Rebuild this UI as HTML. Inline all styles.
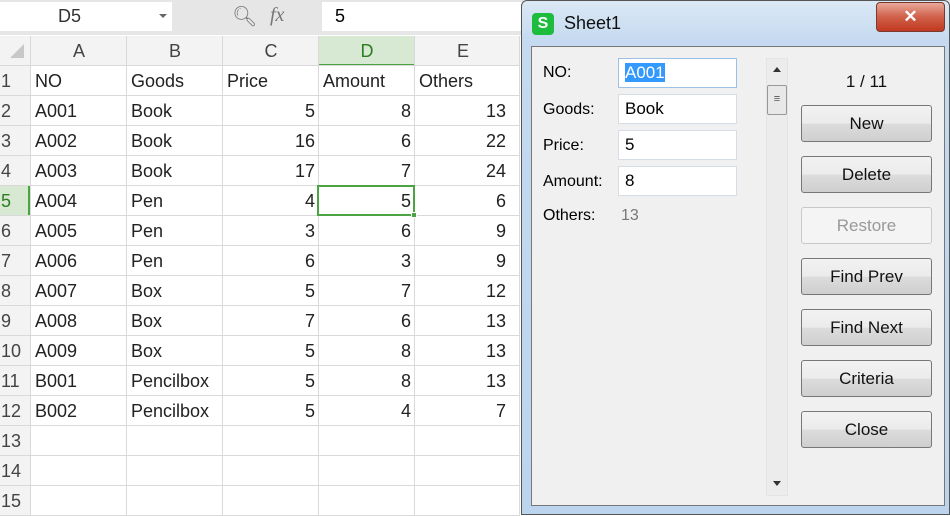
<!DOCTYPE html>
<html><head><style>
*{margin:0;padding:0;box-sizing:border-box}
body{width:950px;height:515px;overflow:hidden;background:#fff;font-family:"Liberation Sans",sans-serif;position:relative}
.a{position:absolute}
.fb{left:0;top:0;width:950px;height:35px;background:#e6e6e6}
.cell{position:absolute;font-size:18px;color:#222;line-height:30px;padding:0 4px;white-space:nowrap;overflow:hidden}
.hl{position:absolute;background:#d9d9d9}
.dlg{font-size:16px;color:#222}
.inp{position:absolute;left:618px;width:119px;height:30px;background:#fff;border:1px solid #d6dde6;line-height:28px;padding-left:6px;font-size:17px}
.lab{position:absolute;left:543px;font-size:16px}
.btn{position:absolute;left:801px;width:131px;height:37px;border:1px solid #777;border-radius:3px;background:linear-gradient(#f2f2f2,#ebebeb 50%,#dcdcdc 51%,#cfcfcf);text-align:center;line-height:35px;font-size:17px;color:#111}
</style></head><body>
<div class="a fb"></div>
<div class="a" style="left:0;top:2px;width:172px;height:29px;background:#fff"></div>
<div class="a" style="left:58px;top:6px;font-size:18px;color:#333">D5</div>
<div class="a" style="left:159px;top:14px;border:4px solid transparent;border-top:4px solid #666"></div>
<div class="a" style="left:232px;top:4px;font-size:20px;color:#777">&#x1F50D;&#xFE0E;</div>
<div class="a" style="left:270px;top:4px;font-size:20px;color:#777;font-style:italic;font-family:'Liberation Serif',serif">fx</div>
<div class="a" style="left:322px;top:2px;width:200px;height:29px;background:#fff"></div>
<div class="a" style="left:335px;top:6px;font-size:18px">5</div>
<div class="a" style="left:0;top:36px;width:520px;height:30px;background:#f3f3f3;border-bottom:1px solid #d9d9d9"></div>
<div class="a" style="left:0;top:66px;width:30px;height:449px;background:#f3f3f3"></div>
<div class="a" style="left:319px;top:36px;width:96px;height:30px;background:#d7e8d3;border-bottom:2px solid #4ca341"></div>
<div class="a" style="left:0;top:186px;width:30px;height:30px;background:#d7e8d3;border-right:2px solid #4ca341"></div>
<div class="a" style="left:10px;top:44px;border-left:14px solid transparent;border-bottom:14px solid #c8c8c8"></div>
<div id="grid"></div>
<script>
var cols=[31,127,223,319,415,520],L=["A","B","C","D","E"];
var h="";
for(var i=0;i<6;i++)h+='<div class="hl" style="left:'+(cols[i]-1)+'px;top:36px;width:1px;height:479px"></div>';
h+='<div class="hl" style="left:30px;top:36px;width:1px;height:479px"></div>';
for(var r=0;r<16;r++)h+='<div class="hl" style="left:0;top:'+(65+r*30)+'px;width:520px;height:1px"></div>';
for(var i=0;i<5;i++)h+='<div class="cell" style="left:'+cols[i]+'px;top:36px;width:96px;text-align:center;color:'+(i==3?'#2d7d22':'#444')+'">'+L[i]+'</div>';
for(var r=1;r<=15;r++)h+='<div class="cell" style="left:0;top:'+(36+r*30)+'px;width:30px;color:'+(r==5?'#2d7d22':'#444')+';padding:0 0 0 1px">'+r+'</div>';
var d=[["NO","Goods","Price","Amount","Others"],["A001","Book",5,8,13],["A002","Book",16,6,22],["A003","Book",17,7,24],["A004","Pen",4,5,6],["A005","Pen",3,6,9],["A006","Pen",6,3,9],["A007","Box",5,7,12],["A008","Box",7,6,13],["A009","Box",5,8,13],["B001","Pencilbox",5,8,13],["B002","Pencilbox",5,4,7]];
for(var r=0;r<d.length;r++)for(var c=0;c<5;c++){var v=d[r][c],n=typeof v=="number";
h+='<div class="cell" style="left:'+cols[c]+'px;top:'+(66+r*30)+'px;width:'+(c==4?105:96)+'px;text-align:'+(n?'right':'left')+';'+(c==4&&n?'width:95px':'')+'">'+v+'</div>';}
document.getElementById("grid").innerHTML=h;
</script>
<div class="a" style="left:317px;top:185px;width:98px;height:31px;border:2px solid #4ca341"></div>
<div class="a" style="left:411px;top:212px;width:6px;height:6px;background:#4ca341;border:1px solid #fff"></div>
<div class="a dlg" style="left:521px;top:0;width:429px;height:515px;background:linear-gradient(#dbe8f5,#c5daf0 40px,#bcd4ee);border:1px solid #555;border-radius:6px 6px 0 0"></div>
<div class="a" style="left:532px;top:13px;width:22px;height:22px;background:#1dbc3d;border-radius:4px;color:#fff;font-weight:bold;text-align:center;font-size:16px;line-height:22px">S</div>
<div class="a" style="left:564px;top:13px;font-size:18px;color:#111">Sheet1</div>
<div class="a" style="left:876px;top:2px;width:69px;height:30px;border:1px solid #7a3a30;border-radius:4px;background:linear-gradient(#e9a99b,#d0604a 50%,#c0391f);color:#fff;text-align:center;font-size:17px;font-weight:bold;line-height:28px">✕</div>
<div class="a" style="left:531px;top:46px;width:414px;height:460px;background:#f0f0f0;border:1px solid #777"></div>
<div class="lab" style="top:64px">NO:</div>
<div class="lab" style="top:101px">Goods:</div>
<div class="lab" style="top:137px">Price:</div>
<div class="lab" style="top:173px">Amount:</div>
<div class="lab" style="top:207px">Others:</div>
<div class="a" style="left:621px;top:207px;font-size:16px;color:#777">13</div>
<div class="inp" style="top:58px;border-color:#9cc0e6"><span style="background:#3399ff;color:#fff">A001</span></div>
<div class="inp" style="top:94px">Book</div>
<div class="inp" style="top:130px">5</div>
<div class="inp" style="top:166px">8</div>
<div class="a" style="left:766px;top:58px;width:22px;height:438px;background:#ececec;border:1px solid #e4e4e4"></div>
<div class="a" style="left:773px;top:67px;border:4px solid transparent;border-bottom:5px solid #333;border-top:0"></div>
<div class="a" style="left:773px;top:481px;border:4px solid transparent;border-top:5px solid #333;border-bottom:0"></div>
<div class="a" style="left:767px;top:85px;width:20px;height:30px;border:1px solid #999;border-radius:2px;background:#e8e8e8;font-size:11px;text-align:center;line-height:26px;color:#555">≡</div>
<div class="a" style="left:801px;top:72px;width:131px;text-align:center;font-size:17px;color:#111">1 / 11</div>
<div class="btn" style="top:105px">New</div>
<div class="btn" style="top:156px">Delete</div>
<div class="btn" style="top:207px;background:#f4f4f4;border-color:#c8c8c8;color:#999">Restore</div>
<div class="btn" style="top:258px">Find Prev</div>
<div class="btn" style="top:309px">Find Next</div>
<div class="btn" style="top:360px">Criteria</div>
<div class="btn" style="top:411px">Close</div>
</body></html>
